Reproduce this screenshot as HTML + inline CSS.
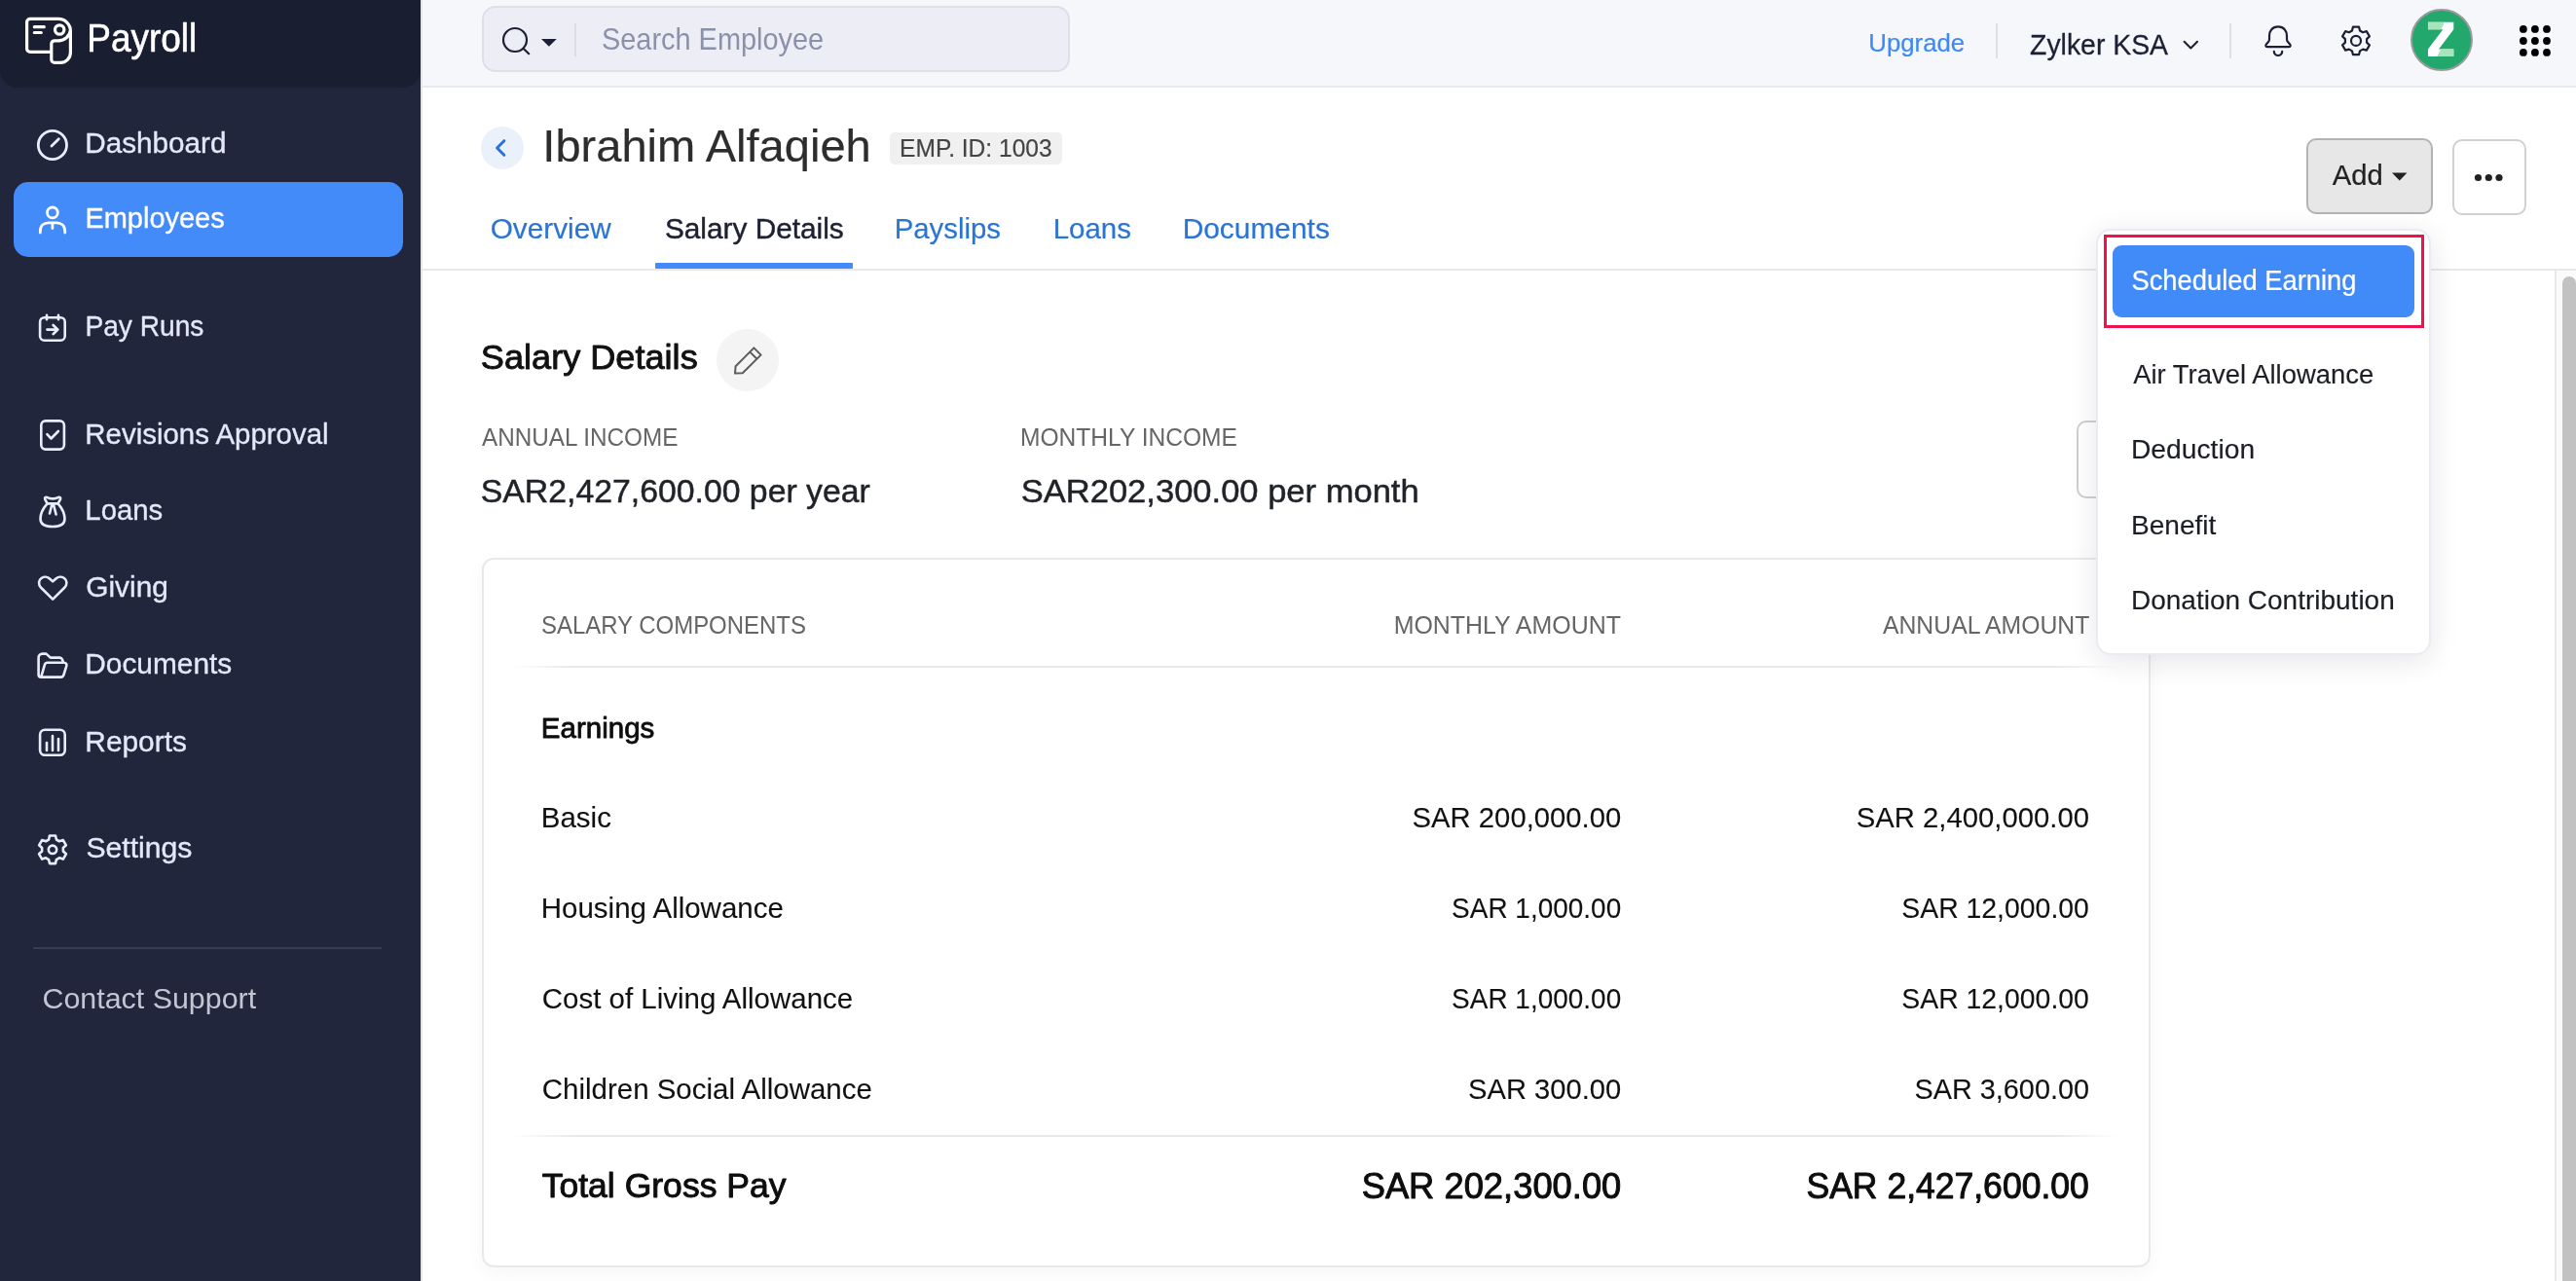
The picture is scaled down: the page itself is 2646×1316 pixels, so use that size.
<!DOCTYPE html>
<html><head><meta charset="utf-8"><style>
html,body{margin:0;padding:0;width:2646px;height:1316px;overflow:hidden;background:#fff;font-family:"Liberation Sans",sans-serif;}
.t{position:absolute;white-space:nowrap;line-height:normal;}
svg{position:absolute;left:0;top:0;will-change:transform;}
</style></head><body>
<div style="position:absolute;left:0;top:0;width:432px;height:1316px;background:#22263d"></div>
<div style="position:absolute;left:0;top:0;width:432px;height:90px;background:#1a1e31;border-radius:0 0 18px 18px"></div>
<div style="position:absolute;left:432px;top:0;width:2px;height:1316px;background:#e4e4e6"></div>
<div style="position:absolute;left:434px;top:0;width:2212px;height:88px;background:#f6f7fb;border-bottom:2px solid #e8e9ee"></div>
<div style="position:absolute;left:495px;top:6px;width:600px;height:64px;background:#ededf6;border:2px solid #dedfe9;border-radius:14px;box-sizing:content-box"></div>
<div style="position:absolute;left:590px;top:24px;width:2px;height:34px;background:#dcdfe2"></div>
<div style="position:absolute;left:14px;top:187px;width:400px;height:77px;background:#428bf9;border-radius:15px"></div>
<div style="position:absolute;left:34px;top:973px;width:358px;height:2px;background:#373c55"></div>
<div style="position:absolute;left:434px;top:276px;width:2212px;height:2px;background:#e8e8ea"></div>
<div style="position:absolute;left:673px;top:270px;width:203px;height:6px;background:#428bf9;border-radius:1px"></div>
<div style="position:absolute;left:2624px;top:278px;width:2px;height:1038px;background:#e9e9e9"></div>
<div style="position:absolute;left:2626px;top:278px;width:20px;height:1038px;background:#fafafa"></div>
<div style="position:absolute;left:2632px;top:284px;width:14px;height:1040px;background:#c2c2c2;border-radius:7px"></div>
<div style="position:absolute;left:494px;top:130px;width:44px;height:44px;border-radius:50%;background:#eaf1fb"></div>
<div style="position:absolute;left:914px;top:136px;width:177px;height:33px;border-radius:5px;background:#f0f0f0"></div>
<div style="position:absolute;left:736px;top:338px;width:64px;height:64px;border-radius:50%;background:#f4f4f4"></div>
<div style="position:absolute;left:2369px;top:142px;width:126px;height:74px;border-radius:10px;background:#e7e7e7;border:2px solid #b3b3b3;box-sizing:content-box"></div>
<div style="position:absolute;left:2519px;top:143px;width:72px;height:74px;border-radius:10px;background:#fff;border:2px solid #d0d0d0;box-sizing:content-box"></div>
<div style="position:absolute;left:2133px;top:432px;width:120px;height:76px;border-radius:10px;background:#fff;border:2px solid #cfcfcf;box-sizing:content-box"></div>
<div style="position:absolute;left:495px;top:573px;width:1710px;height:725px;border-radius:12px;background:#fff;border:2px solid #e9e9e9;box-shadow:0 6px 20px rgba(0,0,0,0.04);box-sizing:content-box"></div>
<div style="position:absolute;left:525px;top:684px;width:1650px;height:2px;background:linear-gradient(90deg,rgba(232,232,232,0),#e8e8e8 4%,#e8e8e8 96%,rgba(232,232,232,0))"></div>
<div style="position:absolute;left:525px;top:1166px;width:1650px;height:2px;background:linear-gradient(90deg,rgba(232,232,232,0),#e8e8e8 4%,#e8e8e8 96%,rgba(232,232,232,0))"></div>
<div style="position:absolute;left:2476px;top:9px;width:60px;height:60px;border-radius:50%;background:#22a86c;border:2px solid #9a9a9a;box-sizing:content-box"></div>
<div style="position:absolute;left:2153px;top:235px;width:340px;height:434px;border-radius:15px;background:#fff;border:2px solid #ebebf3;box-shadow:0 6px 30px rgba(30,30,60,0.11);box-sizing:content-box"></div>
<div style="position:absolute;left:2161px;top:241px;width:323px;height:90px;border:3px solid #f0124f;box-sizing:content-box"></div>
<div style="position:absolute;left:2170px;top:252px;width:310px;height:74px;border-radius:9px;background:#418bf9"></div>
<div style="position:absolute;left:2050px;top:24px;width:2px;height:36px;background:#dfe0e6"></div>
<div style="position:absolute;left:2290px;top:24px;width:2px;height:36px;background:#dfe0e6"></div>
<svg width="2646" height="1316" viewBox="0 0 2646 1316"><g fill="none" stroke="#fff" stroke-width="3.2" stroke-linecap="round" stroke-linejoin="round"><path d="M52.8 53.4 H31 A3.4 3.4 0 0 1 27.6 50 V22.8 A3.4 3.4 0 0 1 31 19.4 H60 A12.4 12.4 0 0 1 72.4 31.8 V54 A10.4 10.4 0 0 1 62 64.4 H56 A3.2 3.2 0 0 1 52.8 61.2 V45 A3.2 3.2 0 0 1 56 41.8 H60 A12.4 12.4 0 0 0 72.4 31"/><circle cx="61.2" cy="30.5" r="4.7"/><path d="M35.3 27.7 H45.3 M35.3 33.5 H42.3"/></g><g fill="none" stroke="#e8edfa" stroke-width="2.8" stroke-linecap="round" stroke-linejoin="round"><circle cx="53.9" cy="149" r="14.6"/><path d="M53 150 L60.3 142.8"/></g><g fill="none" stroke="#fff" stroke-width="2.8" stroke-linecap="round" stroke-linejoin="round"><circle cx="53.9" cy="218.4" r="5.4"/><path d="M41.3 239 V237.5 C41.3 232 45 228.8 50 228.8 H58 C63 228.8 66.7 232 66.7 237.5 V239 M53.9 228.8 V234.5"/></g><g fill="none" stroke="#e8edfa" stroke-width="2.6" stroke-linecap="round" stroke-linejoin="round"><rect x="41.1" y="326.2" width="25.6" height="23.5" rx="4.5"/><path d="M48 323.8 V328.2 M60 323.8 V328.2 M48.4 338.6 H59.2 M54.6 334 L59.4 338.6 L54.6 343.2"/><rect x="42.3" y="432.4" width="23.6" height="29.2" rx="4.5"/><path d="M48.4 446.2 L52.5 450.5 L59.9 443"/><path d="M48.6 517.4 C44 522.5 41.5 528 41.5 533 C41.5 538.8 46.5 541 54 541 C61.5 541 66.5 538.8 66.5 533 C66.5 528 64 522.5 59.6 517.4 M48.6 517.4 L46.2 512.8 Q45.6 510.6 48 510.8 Q51 512.4 54.1 512.4 Q57.2 512.4 60.2 510.8 Q62.6 510.6 62 512.8 L59.6 517.4 Z M53.3 518.5 L51 527.5 M55 518.5 L57.6 528.5"/><path d="M54.2 615.6 L42.2 603.8 C39 600.5 39.5 596 42.5 594 C45.5 592 49 592.5 51 594.5 L54.2 597.4 L57.4 594.5 C59.4 592.5 63 592 66 594 C69 596 69.4 600.5 66.2 603.8 Z"/><path d="M39.6 693.2 V675.6 A4 4 0 0 1 43.6 671.6 H47.4 L51.8 675.6 H61.2 A3 3 0 0 1 64 677.4 L64.8 679.8 M42.2 695.6 H62.6 A3 3 0 0 0 65.4 693.4 L68.3 684.2 A2.6 2.6 0 0 0 65.8 680.7 H48.8 A3 3 0 0 0 45.9 682.8 L42.2 695.6 Q39.6 695.6 39.6 693.2"/><rect x="41.1" y="749.8" width="25.6" height="25.9" rx="5"/><path d="M48 763 V771 M54 756 V771 M60 759 V771"/></g><g fill="none" stroke="#e8edfa" stroke-width="2.6" stroke-linecap="round" stroke-linejoin="round"><path d="M50.96 858.52 L57.04 858.52 L57.94 862.53 L60.92 864.25 L64.85 863.03 L67.89 868.29 L64.86 871.08 L64.86 874.52 L67.89 877.31 L64.85 882.57 L60.92 881.35 L57.94 883.07 L57.04 887.08 L50.96 887.08 L50.06 883.07 L47.08 881.35 L43.15 882.57 L40.11 877.31 L43.14 874.52 L43.14 871.08 L40.11 868.29 L43.15 863.03 L47.08 864.25 L50.06 862.53 Z"/><circle cx="54" cy="872.8" r="4.2"/></g><g fill="none" stroke="#1d2035" stroke-width="2.2" stroke-linecap="round" stroke-linejoin="round"><circle cx="529" cy="41" r="12"/><path d="M538 50.2 L543.2 55.2"/></g><path d="M556 40 H571.8 L563.9 47.8 Z" fill="#1d2035"/><path d="M2243.6 42.8 L2250.3 49.4 L2257 42.8" fill="none" stroke="#1d2035" stroke-width="2.1" stroke-linecap="round" stroke-linejoin="round"/><g fill="none" stroke="#1d2035" stroke-width="2.2" stroke-linecap="round" stroke-linejoin="round"><path d="M2340 27.4 C2334 27.4 2331 32 2331 37 V40.5 C2331 41.6 2330.6 42.5 2329.6 43.5 L2328 45.3 C2326.6 46.8 2327.4 48.2 2329.2 48.2 H2350.8 C2352.6 48.2 2353.4 46.8 2352 45.3 L2350.4 43.5 C2349.4 42.5 2349 41.6 2349 40.5 V37 C2349 32 2346 27.4 2340 27.4 Z M2335.8 52.8 A4.2 4.2 0 0 0 2344.2 52.8"/><path d="M2416.96 27.62 L2423.04 27.62 L2424.01 31.44 L2427.05 33.20 L2430.85 32.13 L2433.89 37.39 L2431.06 40.15 L2431.06 43.65 L2433.89 46.41 L2430.85 51.67 L2427.05 50.60 L2424.01 52.36 L2423.04 56.18 L2416.96 56.18 L2415.99 52.36 L2412.95 50.60 L2409.15 51.67 L2406.11 46.41 L2408.94 43.65 L2408.94 40.15 L2406.11 37.39 L2409.15 32.13 L2412.95 33.20 L2415.99 31.44 Z"/><circle cx="2420" cy="41.9" r="5"/></g><circle cx="2591.9" cy="29.9" r="3.9" fill="#000"/><circle cx="2591.9" cy="42" r="3.9" fill="#000"/><circle cx="2591.9" cy="53.9" r="3.9" fill="#000"/><circle cx="2603.9" cy="29.9" r="3.9" fill="#000"/><circle cx="2603.9" cy="42" r="3.9" fill="#000"/><circle cx="2603.9" cy="53.9" r="3.9" fill="#000"/><circle cx="2616" cy="29.9" r="3.9" fill="#000"/><circle cx="2616" cy="42" r="3.9" fill="#000"/><circle cx="2616" cy="53.9" r="3.9" fill="#000"/><path d="M2494 22.8 H2520.3 V30.2 L2505 50.6 H2520.3 V58 H2494 V50.6 L2509.3 30.2 H2494 Z" fill="#fff"/><path d="M2494 22.8 H2511 L2507.5 30.2 H2494 Z" fill="#a8e4bc"/><path d="M2503.5 58 L2507 50.6 H2520.3 V58 Z" fill="#a8e4bc"/><path d="M517.8 144.7 L510.6 152 L517.8 159.3" fill="none" stroke="#2a72d4" stroke-width="3" stroke-linecap="round" stroke-linejoin="round"/><g fill="none" stroke="#5c5c5c" stroke-width="2" stroke-linejoin="round"><path d="M755 383.6 L755.6 376.2 L774.4 357.4 L781.6 364.6 L762.8 383.2 Z M770.3 361.6 L777.5 368.7"/></g><path d="M2457 177.5 H2472.5 L2464.75 185.5 Z" fill="#222"/><circle cx="2545.5" cy="182.5" r="3.6" fill="#222"/><circle cx="2556.3" cy="182.5" r="3.6" fill="#222"/><circle cx="2567" cy="182.5" r="3.6" fill="#222"/><g font-family="Liberation Sans"><text transform="translate(89.25,53.10) scale(0.9275,1)" font-size="39.83" fill="#fff" stroke="#fff" stroke-width="0.6" stroke-linejoin="round">Payroll</text><text transform="translate(87.33,157.10) scale(0.9895,1)" font-size="30.00" fill="#e3e9f8" stroke="#e3e9f8" stroke-width="0.35" stroke-linejoin="round">Dashboard</text><text transform="translate(87.38,234.10) scale(0.9658,1)" font-size="30.00" fill="#fff" stroke="#fff" stroke-width="0.35" stroke-linejoin="round">Employees</text><text transform="translate(87.45,345.10) scale(0.9378,1)" font-size="30.00" fill="#e3e9f8" stroke="#e3e9f8" stroke-width="0.35" stroke-linejoin="round">Pay Runs</text><text transform="translate(87.35,456.10) scale(0.9812,1)" font-size="30.00" fill="#e3e9f8" stroke="#e3e9f8" stroke-width="0.35" stroke-linejoin="round">Revisions Approval</text><text transform="translate(87.36,534.10) scale(0.9773,1)" font-size="30.00" fill="#e3e9f8" stroke="#e3e9f8" stroke-width="0.35" stroke-linejoin="round">Loans</text><text transform="translate(88.28,612.85) scale(0.9945,1)" font-size="30.00" fill="#e3e9f8" stroke="#e3e9f8" stroke-width="0.35" stroke-linejoin="round">Giving</text><text transform="translate(87.31,692.10) scale(0.9949,1)" font-size="30.00" fill="#e3e9f8" stroke="#e3e9f8" stroke-width="0.35" stroke-linejoin="round">Documents</text><text transform="translate(87.31,771.60) scale(0.9961,1)" font-size="30.00" fill="#e3e9f8" stroke="#e3e9f8" stroke-width="0.35" stroke-linejoin="round">Reports</text><text transform="translate(88.42,881.10) scale(1.0064,1)" font-size="30.00" fill="#e3e9f8" stroke="#e3e9f8" stroke-width="0.35" stroke-linejoin="round">Settings</text><text transform="translate(43.48,1036.10) scale(1.0377,1)" font-size="29.30" fill="#c3c6d2">Contact Support</text><text transform="translate(618.00,50.60) scale(0.9474,1)" font-size="30.52" fill="#8b91a9">Search Employee</text><text transform="translate(1919.30,52.80) scale(1.0081,1)" font-size="25.58" fill="#3c8af6" stroke="#3c8af6" stroke-width="0.2" stroke-linejoin="round">Upgrade</text><text transform="translate(2085.03,55.60) scale(0.9627,1)" font-size="29.51" fill="#1d2035" stroke="#1d2035" stroke-width="0.3" stroke-linejoin="round">Zylker KSA</text><text transform="translate(557.35,165.60) scale(1.0184,1)" font-size="46.22" fill="#2d2d2d" stroke="#2d2d2d" stroke-width="0.2" stroke-linejoin="round">Ibrahim Alfaqieh</text><text transform="translate(924.07,161.00) scale(0.9497,1)" font-size="25.87" fill="#444" stroke="#444" stroke-width="0.2" stroke-linejoin="round">EMP. ID: 1003</text><text transform="translate(503.69,244.60) scale(0.9853,1)" font-size="30.23" fill="#2a74d6" stroke="#2a74d6" stroke-width="0.2" stroke-linejoin="round">Overview</text><text transform="translate(682.88,244.60) scale(0.9981,1)" font-size="29.87" fill="#1d2033" stroke="#1d2033" stroke-width="0.45" stroke-linejoin="round">Salary Details</text><text transform="translate(918.68,244.60) scale(0.9707,1)" font-size="30.23" fill="#2a74d6" stroke="#2a74d6" stroke-width="0.2" stroke-linejoin="round">Payslips</text><text transform="translate(1081.67,244.60) scale(0.9742,1)" font-size="30.23" fill="#2a74d6" stroke="#2a74d6" stroke-width="0.2" stroke-linejoin="round">Loans</text><text transform="translate(1214.63,244.60) scale(0.9896,1)" font-size="30.23" fill="#2a74d6" stroke="#2a74d6" stroke-width="0.2" stroke-linejoin="round">Documents</text><text transform="translate(2395.73,190.10) scale(1.0166,1)" font-size="28.78" fill="#222" stroke="#222" stroke-width="0.2" stroke-linejoin="round">Add</text><text transform="translate(2189.39,297.85) scale(0.9531,1)" font-size="28.71" fill="#fff" stroke="#fff" stroke-width="0.25" stroke-linejoin="round">Scheduled Earning</text><text transform="translate(2191.21,394.00) scale(0.9861,1)" font-size="27.83" fill="#1b1e24" stroke="#1b1e24" stroke-width="0.15" stroke-linejoin="round">Air Travel Allowance</text><text transform="translate(2188.94,471.00) scale(1.0154,1)" font-size="27.83" fill="#1b1e24" stroke="#1b1e24" stroke-width="0.15" stroke-linejoin="round">Deduction</text><text transform="translate(2188.96,549.30) scale(1.0086,1)" font-size="27.83" fill="#1b1e24" stroke="#1b1e24" stroke-width="0.15" stroke-linejoin="round">Benefit</text><text transform="translate(2188.96,626.00) scale(1.0063,1)" font-size="27.83" fill="#1b1e24" stroke="#1b1e24" stroke-width="0.15" stroke-linejoin="round">Donation Contribution</text><text transform="translate(493.82,378.60) scale(1.0233,1)" font-size="35.32" fill="#111" stroke="#111" stroke-width="0.9" stroke-linejoin="round">Salary Details</text><text transform="translate(494.94,458.10) scale(0.9286,1)" font-size="26.16" fill="#666">ANNUAL INCOME</text><text transform="translate(1047.97,458.10) scale(0.9395,1)" font-size="26.16" fill="#666">MONTHLY INCOME</text><text transform="translate(493.73,516.20) scale(1.0004,1)" font-size="33.79" fill="#1f2328" stroke="#1f2328" stroke-width="0.5" stroke-linejoin="round">SAR2,427,600.00 per year</text><text transform="translate(1048.69,516.20) scale(1.0227,1)" font-size="33.79" fill="#1f2328" stroke="#1f2328" stroke-width="0.5" stroke-linejoin="round">SAR202,300.00 per month</text><text transform="translate(555.92,650.85) scale(0.9161,1)" font-size="26.16" fill="#666">SALARY COMPONENTS</text><text transform="translate(1431.69,650.60) scale(0.9537,1)" font-size="26.16" fill="#666">MONTHLY AMOUNT</text><text transform="translate(1933.94,650.60) scale(0.9477,1)" font-size="26.16" fill="#666">ANNUAL AMOUNT</text><text transform="translate(555.76,757.90) scale(1.0167,1)" font-size="29.07" fill="#0d0d0d" stroke="#0d0d0d" stroke-width="0.8" stroke-linejoin="round">Earnings</text><text transform="translate(555.82,849.70) scale(0.9945,1)" font-size="29.65" fill="#111" stroke="#111" stroke-width="0.1" stroke-linejoin="round">Basic</text><text transform="translate(1450.53,849.70) scale(0.9874,1)" font-size="29.65" fill="#111" stroke="#111" stroke-width="0.1" stroke-linejoin="round">SAR 200,000.00</text><text transform="translate(1906.73,849.70) scale(0.9876,1)" font-size="29.65" fill="#111" stroke="#111" stroke-width="0.1" stroke-linejoin="round">SAR 2,400,000.00</text><text transform="translate(555.82,942.70) scale(0.9945,1)" font-size="29.65" fill="#111" stroke="#111" stroke-width="0.1" stroke-linejoin="round">Housing Allowance</text><text transform="translate(1491.09,942.70) scale(0.9438,1)" font-size="29.65" fill="#111" stroke="#111" stroke-width="0.1" stroke-linejoin="round">SAR 1,000.00</text><text transform="translate(1953.27,942.70) scale(0.9584,1)" font-size="29.65" fill="#111" stroke="#111" stroke-width="0.1" stroke-linejoin="round">SAR 12,000.00</text><text transform="translate(556.78,1035.70) scale(0.9945,1)" font-size="29.65" fill="#111" stroke="#111" stroke-width="0.1" stroke-linejoin="round">Cost of Living Allowance</text><text transform="translate(1491.09,1035.70) scale(0.9438,1)" font-size="29.65" fill="#111" stroke="#111" stroke-width="0.1" stroke-linejoin="round">SAR 1,000.00</text><text transform="translate(1953.27,1035.70) scale(0.9584,1)" font-size="29.65" fill="#111" stroke="#111" stroke-width="0.1" stroke-linejoin="round">SAR 12,000.00</text><text transform="translate(556.78,1128.70) scale(0.9945,1)" font-size="29.65" fill="#111" stroke="#111" stroke-width="0.1" stroke-linejoin="round">Children Social Allowance</text><text transform="translate(1508.04,1128.70) scale(0.9838,1)" font-size="29.65" fill="#111" stroke="#111" stroke-width="0.1" stroke-linejoin="round">SAR 300.00</text><text transform="translate(1966.45,1128.70) scale(0.9729,1)" font-size="29.65" fill="#111" stroke="#111" stroke-width="0.1" stroke-linejoin="round">SAR 3,600.00</text><text transform="translate(556.67,1230.10) scale(0.9964,1)" font-size="35.68" fill="#0d0d0d" stroke="#0d0d0d" stroke-width="0.95" stroke-linejoin="round">Total Gross Pay</text><text transform="translate(1855.48,1230.60) scale(0.9837,1)" font-size="36.12" fill="#0d0d0d" stroke="#0d0d0d" stroke-width="0.95" stroke-linejoin="round">SAR 2,427,600.00</text><text transform="translate(1398.64,1230.60) scale(1.0065,1)" font-size="36.12" fill="#0d0d0d" stroke="#0d0d0d" stroke-width="0.95" stroke-linejoin="round">SAR 202,300.00</text></g></svg>
</body></html>
